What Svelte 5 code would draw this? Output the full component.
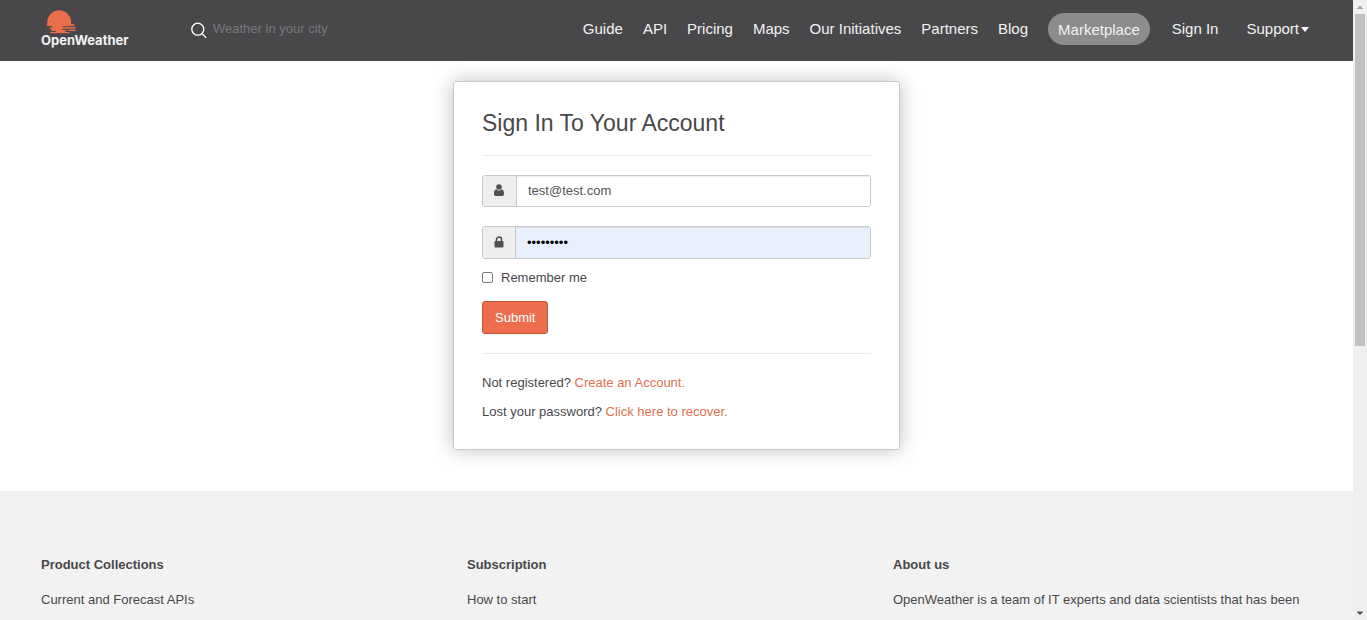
<script>
  const links = ['Guide', 'API', 'Pricing', 'Maps', 'Our Initiatives', 'Partners', 'Blog'];
  const columns = [
    { title: 'Product Collections', text: 'Current and Forecast APIs', link: true },
    { title: 'Subscription', text: 'How to start', link: true },
    { title: 'About us', text: 'OpenWeather is a team of IT experts and data scientists that has been', link: false }
  ];
  let email = $state('test@test.com');
  let password = $state('password1');
  let remember = $state(false);
</script>

<div class="window">
  <div class="page">
    <header>
      <a class="logo" href="#home">
        <svg width="34" height="24" viewBox="0 0 34 24" aria-hidden="true">
          <path fill="#eb6e4b" d="M2.400 14.500A12 12 0 1 1 26 14.500H29V16H2v-1.500zM7 15.500h16v3.500H7zM6 18.700h12v2.500H6zM9 20.500h11v2.300H9z" />
          <path stroke="#eb6e4b" stroke-width="1.400" stroke-linecap="round" d="M2 15.200h27M5 18h12M20 17.700h10M8 20.500h13M24 20.200h6M6 22.600h18" />
          <path stroke="#48484a" stroke-width="0.900" d="M17.500 16.700h6M17 19.100h5M6 21.400h5" />
        </svg>
        <span>OpenWeather</span>
      </a>
      <form class="search" role="search">
        <svg width="17" height="17" viewBox="0 0 17 17" fill="none" stroke="#fff" stroke-width="1.300" aria-hidden="true">
          <circle cx="6.800" cy="7.200" r="6" />
          <path d="M11 11.600l4.200 4.200" />
        </svg>
        <input type="text" aria-label="Weather in your city" placeholder="Weather in your city" />
      </form>
      <nav>
        {#each links as label}
          <a href="#{label}">{label}</a>
        {/each}
        <a class="pill" href="#marketplace">Marketplace</a>
        <a class="signin" href="#signin">Sign In</a>
        <button type="button" class="support">Support<i class="caret"></i></button>
      </nav>
    </header>

    <main>
      <section class="card">
        <h1>Sign In To Your Account</h1>
        <hr />
        <form onsubmit={(e) => e.preventDefault()}>
          <div class="group">
            <label for="email" aria-label="Email">
              <svg width="10" height="12" viewBox="0 0 10 12" fill="#505054" aria-hidden="true">
                <circle cx="5" cy="3" r="2.800" />
                <path d="M2.300 5.200C.6 5.500 0 7.200 0 9.400 0 11 .8 12 2 12h6c1.200 0 2-1 2-2.600 0-2.200-.6-3.900-2.300-4.200C7 6.100 6 6.500 5 6.500s-2-.4-2.700-1.300z" />
              </svg>
            </label>
            <input id="email" type="email" bind:value={email} />
          </div>
          <div class="group filled">
            <label for="password" aria-label="Password">
              <svg width="10" height="12" viewBox="0 0 10 12" aria-hidden="true">
                <rect x="0.500" y="5" width="9" height="6.500" rx="0.800" fill="#505054" />
                <path d="M2.500 5.500V3.500a2.500 2.500 0 0 1 5 0v2" fill="none" stroke="#505054" stroke-width="1.500" />
              </svg>
            </label>
            <input id="password" type="password" bind:value={password} />
          </div>
          <label class="remember"><input type="checkbox" bind:checked={remember} />Remember me</label>
          <button class="submit" type="submit">Submit</button>
        </form>
        <hr />
        <p>Not registered? <a href="#register">Create an Account.</a></p>
        <p>Lost your password? <a href="#recover">Click here to recover.</a></p>
      </section>
    </main>

    <footer>
      {#each columns as c}
        <section>
          <h2>{c.title}</h2>
          {#if c.link}<a href="#{c.title}">{c.text}</a>{:else}<p>{c.text}</p>{/if}
        </section>
      {/each}
    </footer>
  </div>

  <div class="scrollbar" aria-hidden="true">
    <svg width="14" height="14" viewBox="0 0 14 14"><path fill="#a3a3a3" d="M7 5.500l3.500 3.500h-7z" /></svg>
    <div class="track"><div class="thumb"></div></div>
    <svg width="14" height="14" viewBox="0 0 14 14"><path fill="#505050" d="M7 9L3.500 5.500h7z" /></svg>
  </div>
</div>

<style>
  :global(body) {
    background: #fff;
    font-family: "Liberation Sans", Arial, sans-serif;
    font-size: 13px;
    line-height: 19px;
    color: #48484a;
  }
  * { box-sizing: border-box; }
  h1, h2, p { margin: 0; }
  a { color: inherit; text-decoration: none; }
  input, button { font: inherit; color: inherit; }
  .window { display: flex; height: 100vh; overflow: hidden; }
  .page { flex: 1; min-width: 0; display: flex; flex-direction: column; }

  header {
    display: flex;
    align-items: center;
    flex-shrink: 0;
    height: 61px;
    padding: 0 44px 4px 41px;
    background: #48484a;
  }
  .logo {
    display: flex;
    flex-direction: column;
    width: 150px;
    font: 700 13px/13px Inter, sans-serif;
    color: #f2f2f2;
  }
  .logo svg { margin-left: 4px; }
  .search { display: flex; align-items: center; gap: 5px; flex: 1; min-width: 0; }
  .search svg { flex-shrink: 0; margin-top: 4px; }
  .search input { flex: 1; min-width: 0; padding: 0; border: 0; outline: 0; background: none; }
  .search input::placeholder { color: #79797b; opacity: 1; }
  nav {
    display: flex;
    align-items: center;
    gap: 20px;
    font-size: 15px;
    color: #f2f2f2;
    white-space: nowrap;
  }
  .pill { padding: 7px 10px 6px; margin-top: 1px; border-radius: 16px; background: #8c8c8d; }
  .signin { padding: 0 8px 0 2px; }
  .support { display: flex; align-items: center; gap: 2px; padding: 0; border: 0; background: none; }
  .caret { border: 4px solid transparent; border-top: 5px solid #fff; border-bottom: 0; margin-top: 2px; }

  main { flex-shrink: 0; padding: 20px 20px 41px; }
  .card {
    max-width: 447px;
    margin: 0 auto;
    padding: 28px;
    border: 1px solid #c8c8c8;
    border-radius: 3px;
    box-shadow: 0 0 20px rgba(0, 0, 0, 0.25);
  }
  h1 { font-size: 23px; line-height: 27px; font-weight: 400; }
  hr { height: 1px; margin: 18px 0 19px; border: 0; background: #ebebeb; }
  .group {
    display: flex;
    height: 32px;
    margin-bottom: 19px;
    border: 1px solid #c8c8c8;
    border-radius: 3px;
    overflow: hidden;
  }
  .group label {
    display: grid;
    place-items: center;
    width: 34px;
    padding: 0 1px 2px 0;
    border-right: 1px solid #c8c8c8;
    background: #eee;
  }
  .group input {
    flex: 1;
    min-width: 0;
    padding: 0 11px 1px;
    border: 0;
    outline: 0;
    background: #fff;
    color: #555;
    box-shadow: inset 0 1px 1px rgba(0, 0, 0, 0.08);
  }
  .filled { height: 33px; margin-bottom: 9px; }
  .filled label { width: 33px; }
  .filled input { background: #e8f0fe; color: #000; }
  .remember { display: flex; align-items: center; gap: 8px; margin-bottom: 14px; }
  .remember input {
    appearance: none;
    width: 11px;
    height: 11px;
    margin: 0;
    border: 1px solid #767676;
    border-radius: 2px;
    background: #fff;
  }
  .remember input:checked { background: #eb6e4b; }
  .submit {
    display: block;
    padding: 6px 12px;
    border: 1px solid #c2593b;
    border-radius: 3px;
    background: #ec6e4e;
    color: #fff;
  }
  form + hr { margin-top: 19px; }
  .card p + p { margin-top: 10px; }
  .card p a { color: #e0704f; }

  footer {
    flex: 1 0 auto;
    display: grid;
    grid-template-columns: repeat(3, minmax(0, 1fr));
    padding: 64px 34px 0 41px;
    background: #f2f2f2;
  }
  h2 { margin-bottom: 16px; font-size: 13px; line-height: 19px; font-weight: 700; }

  .scrollbar { display: flex; flex-direction: column; flex-shrink: 0; width: 14px; background: #f0f0f0; }
  .track { flex: 1; padding: 0 2px; }
  .thumb { height: 56%; background: #c1c1c1; }
</style>
